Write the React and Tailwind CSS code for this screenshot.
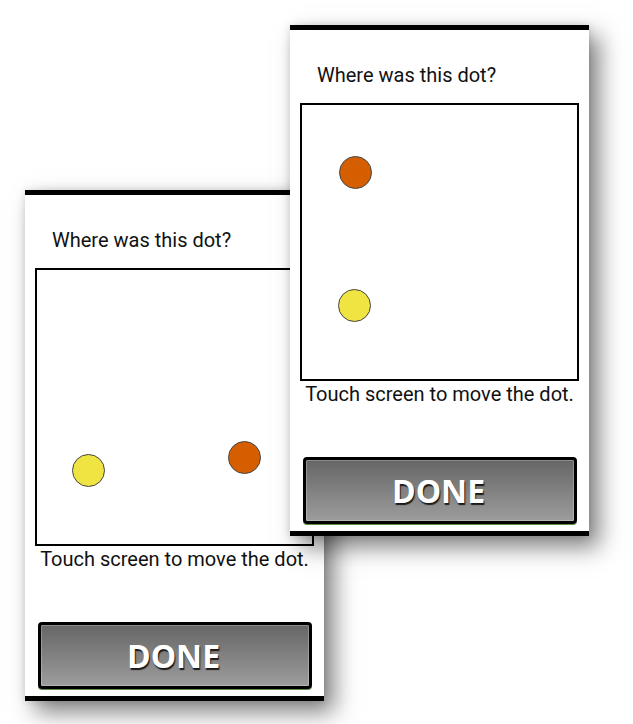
import React from "react";

function Dot({ color, x, y }) {
  return (
    <div
      className={`absolute w-[33px] h-[33px] rounded-full border border-[#444] ${color}`}
      style={{ left: x - 18.5, top: y - 18.5 }}
    />
  );
}

function Card({ dots, className }) {
  return (
    <div
      className={`absolute w-[299px] h-[511px] bg-white border-y-[5px] border-black flex flex-col shadow-[10px_11px_22px_rgba(0,0,0,0.5),0_0_8px_rgba(0,0,0,0.12)] ${className}`}
    >
      <div className="mt-[34px] ml-[27px] text-[20px] leading-[23px] text-[#111] font-['Roboto','Liberation_Sans',sans-serif]">
        Where was this dot?
      </div>
      <div className="relative mt-[16px] ml-[10px] w-[279px] h-[278px] border-2 border-black bg-white">
        {dots.map((d, i) => (
          <Dot key={i} {...d} />
        ))}
      </div>
      <div className="mt-[2px] w-[279px] ml-[10px] text-center whitespace-nowrap text-[20px] leading-[23px] text-[#111] font-['Roboto','Liberation_Sans',sans-serif]">
        Touch screen to move the dot.
      </div>
      <div className="mt-[51px] ml-[13px] w-[274px] h-[67px] rounded-[4px] border-[3px] border-black bg-gradient-to-b from-[#666666] to-[#9d9d9d] shadow-[inset_0_0_0_1px_rgba(255,255,255,0.25),0_1px_0_#5f8f4a] flex items-center justify-center">
        <span className="mr-[3px] text-white font-bold text-[32px] leading-none font-['Open_Sans','Liberation_Sans',sans-serif] [text-shadow:1px_2px_1px_rgba(20,20,20,0.95)]">
          DONE
        </span>
      </div>
    </div>
  );
}

export default function App() {
  return (
    <div className="relative w-[633px] h-[724px] bg-white overflow-hidden">
      <Card
        className="left-[25px] top-[190px]"
        dots={[
          { color: "bg-[#f0e442]", x: 53, y: 202 },
          { color: "bg-[#d55e00]", x: 209, y: 189 },
        ]}
      />
      <Card
        className="left-[290px] top-[25px]"
        dots={[
          { color: "bg-[#d55e00]", x: 55, y: 69 },
          { color: "bg-[#f0e442]", x: 54, y: 202 },
        ]}
      />
    </div>
  );
}
